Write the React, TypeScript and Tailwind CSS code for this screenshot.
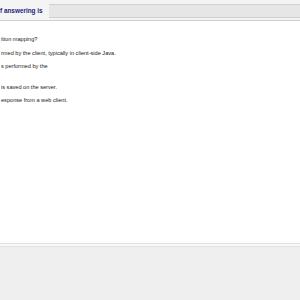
export default function App() {
  return (
    <div
      className="w-[300px] h-[300px] overflow-hidden bg-white flex flex-col"
      style={{ fontFamily: '"Liberation Sans", Arial, sans-serif' }}
    >
      {/* Header bar */}
      <div className="h-[21px] flex items-center gap-[6px] bg-[#f4f4f4] border-b border-[#cfcfcf] pt-[2px]">
        <span className="text-[6.4px] font-bold text-[#1a237e] whitespace-nowrap leading-none">
          f answering is
        </span>
        <div className="flex-1 h-[14px] bg-[#e6e6e6] border-y border-[#d0d0d0]" />
      </div>

      {/* Question text */}
      <div className="flex-1 flex flex-col pt-[16px] pl-px text-[5.6px] leading-none text-[#222]">
        <p className="h-[14px]">ition mapping?</p>
        <p className="h-[13px]">rmed by the client, typically in client-side Java.</p>
        <p className="h-[21px]">s performed by the</p>
        <p className="h-[13px]">is saved on the server.</p>
        <p>esponse from a web client.</p>
      </div>

      {/* Footer */}
      <div className="h-[57px] bg-[#efefef] border-t border-[#e2e2e2] flex flex-col">
        <div className="h-[3px] bg-[#f8f8f8] border-b border-[#e4e4e4]" />
      </div>
    </div>
  )
}
